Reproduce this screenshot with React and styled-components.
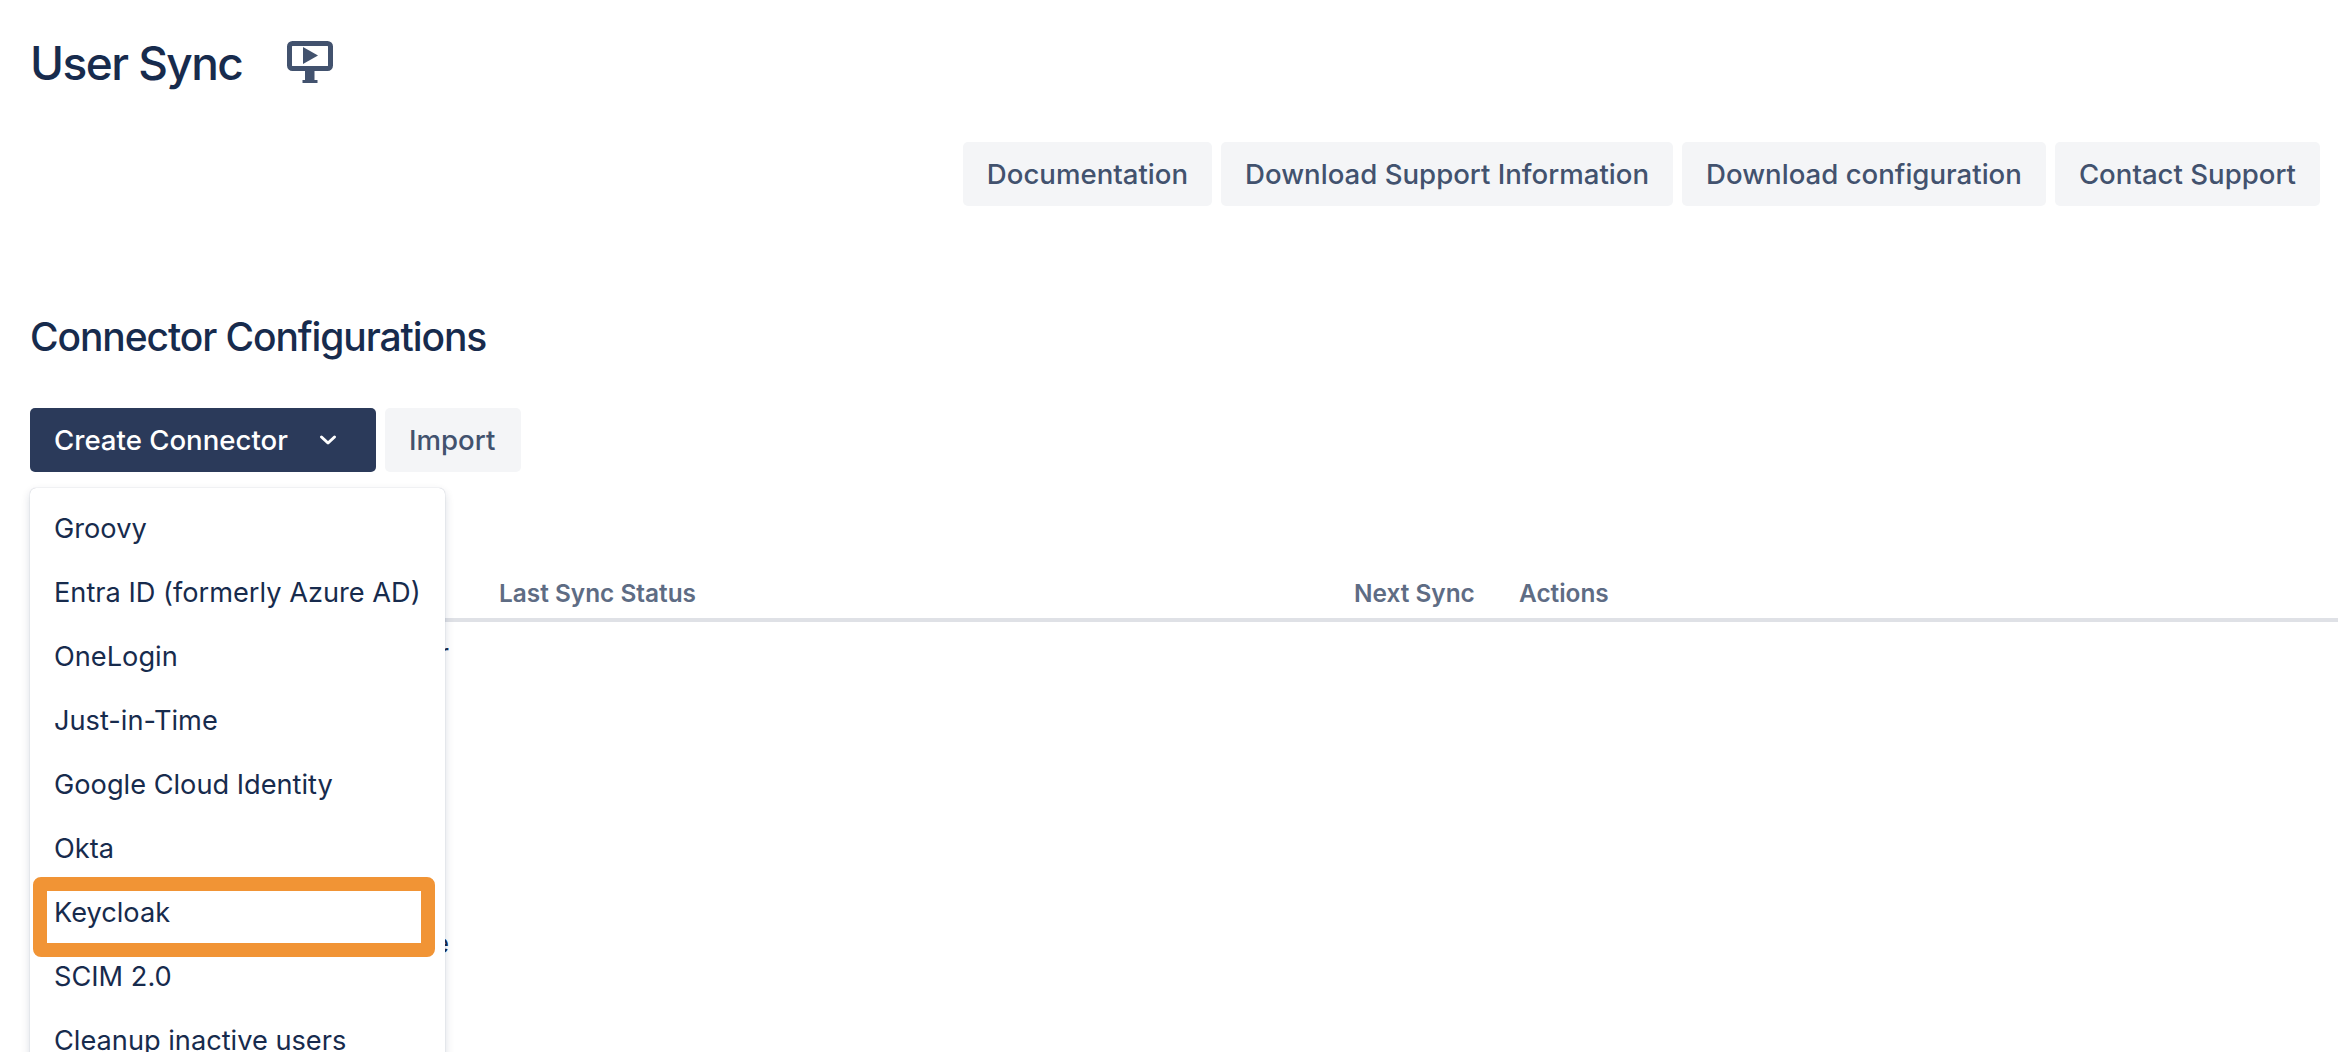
import React from "react";
import styled, { createGlobalStyle } from "styled-components";

const menuItems = [
  "Groovy",
  "Entra ID (formerly Azure AD)",
  "OneLogin",
  "Just-in-Time",
  "Google Cloud Identity",
  "Okta",
  "Keycloak",
  "SCIM 2.0",
  "Cleanup inactive users",
];

const topActions = [
  "Documentation",
  "Download Support Information",
  "Download configuration",
  "Contact Support",
];

const MonitorIcon = () => (
  <svg width="46" height="42" viewBox="0 0 46 42">
    <rect x="2.5" y="2.5" width="41" height="25" rx="3" fill="none" stroke="#42526e" strokeWidth="5" />
    <path d="M16 6 L31 14.5 L16 23 Z" fill="#42526e" />
    <rect x="18" y="30" width="9.5" height="9" fill="#42526e" />
    <rect x="15.5" y="39" width="15" height="3" fill="#42526e" />
  </svg>
);

const App = () => {
  return (
    <Page>
      <GlobalStyle />
      <TitleRow>
        <Title>User Sync</Title>
        <MonitorIcon />
      </TitleRow>
      <TopActions>
        {topActions.map((label) => (
          <Button key={label}>{label}</Button>
        ))}
      </TopActions>
      <Heading>Connector Configurations</Heading>
      <CreateRow>
        <PrimaryButton>
          Create Connector
          <svg width="18" height="18" viewBox="0 0 18 18">
            <path d="M2.5 6 L9 12 L15.5 6" fill="none" stroke="#fff" strokeWidth="3" strokeLinecap="round" strokeLinejoin="round" />
          </svg>
        </PrimaryButton>
        <ImportButton>Import</ImportButton>
        <Menu>
          {menuItems.map((item) => (
            <MenuItem key={item}>
              {item}
              {item === "Keycloak" && <Highlight />}
            </MenuItem>
          ))}
        </Menu>
      </CreateRow>
      <TableHead>
        <NameHead />
        <StatusHead>Last Sync Status</StatusHead>
        <NextHead>Next Sync</NextHead>
        <ActionsHead>Actions</ActionsHead>
      </TableHead>
      <Row>
        <NameCell>Connector</NameCell>
      </Row>
      <LowerRow>
        <NameCell>Workspace</NameCell>
      </LowerRow>
    </Page>
  );
};

export default App;

const GlobalStyle = createGlobalStyle`
  html, body {
    margin: 0;
    padding: 0;
    background: #fff;
    overflow: hidden;
  }
  * {
    box-sizing: border-box;
  }
`;

const Page = styled.div`
  width: 2338px;
  height: 1052px;
  overflow: hidden;
  font-family: Inter, "Liberation Sans", sans-serif;
  color: #172b4d;
  padding-top: 38px;
`;

const TitleRow = styled.div`
  display: flex;
  align-items: flex-start;
  gap: 45px;
  padding-left: 30px;
  height: 60px;

  svg {
    margin-top: 3px;
  }
`;

const Title = styled.h1`
  margin: 0;
  font-size: 46px;
  line-height: 50px;
  font-weight: 500;
  letter-spacing: -1.55px;
`;

const TopActions = styled.div`
  display: flex;
  justify-content: flex-end;
  gap: 9px;
  padding-right: 18px;
  margin-top: 44px;
`;

const Button = styled.button`
  height: 64px;
  padding: 0 24px;
  border: 0;
  border-radius: 5px;
  background: #f4f5f7;
  color: #42526e;
  font-family: inherit;
  font-size: 27.6px;
  font-weight: 500;
  white-space: nowrap;
`;

const ImportButton = styled(Button)`
  width: 136px;
  text-align: left;
`;

const Heading = styled.h2`
  margin: 107px 0 0 30px;
  font-size: 39px;
  line-height: 48px;
  font-weight: 500;
  letter-spacing: -1.1px;
`;

const CreateRow = styled.div`
  position: relative;
  display: flex;
  gap: 9px;
  margin: 47px 0 0 30px;
`;

const PrimaryButton = styled(Button)`
  display: flex;
  align-items: center;
  gap: 31px;
  width: 346px;
  background: #2b3a5a;
  color: #fff;
`;

const Menu = styled.div`
  position: absolute;
  left: 0;
  top: 80px;
  width: 415px;
  padding: 9px 0;
  background: #fff;
  border-radius: 6px;
  box-shadow: 0 0 1px rgba(9, 30, 66, 0.35), 0 4px 10px rgba(9, 30, 66, 0.16);
  z-index: 2;
`;

const MenuItem = styled.div`
  position: relative;
  height: 64px;
  padding-left: 24px;
  font-size: 27.2px;
  line-height: 64px;
  color: #172b4d;
  white-space: nowrap;
`;

const Highlight = styled.span`
  position: absolute;
  left: 3px;
  right: 10px;
  top: -4px;
  bottom: -12px;
  border: 14px solid #f19435;
  border-radius: 8px;
`;

const TableHead = styled.div`
  display: flex;
  align-items: center;
  height: 61px;
  margin: 89px 0 0 30px;
  padding-top: 7px;
  border-bottom: 4px solid #dfe1e6;
  font-size: 24.4px;
  font-weight: 600;
  color: #5e6c84;
`;

const NameHead = styled.div`
  width: 469px;
`;

const StatusHead = styled.div`
  width: 855px;
`;

const NextHead = styled.div`
  width: 165px;
`;

const ActionsHead = styled.div``;

const Row = styled.div`
  width: 449px;
  height: 60px;
  padding: 16px 0 0 54px;
  font-size: 27.2px;
  line-height: 32px;
  text-align: right;
`;

const LowerRow = styled(Row)`
  margin-top: 230px;
`;

const NameCell = styled.div`
  white-space: nowrap;
`;
